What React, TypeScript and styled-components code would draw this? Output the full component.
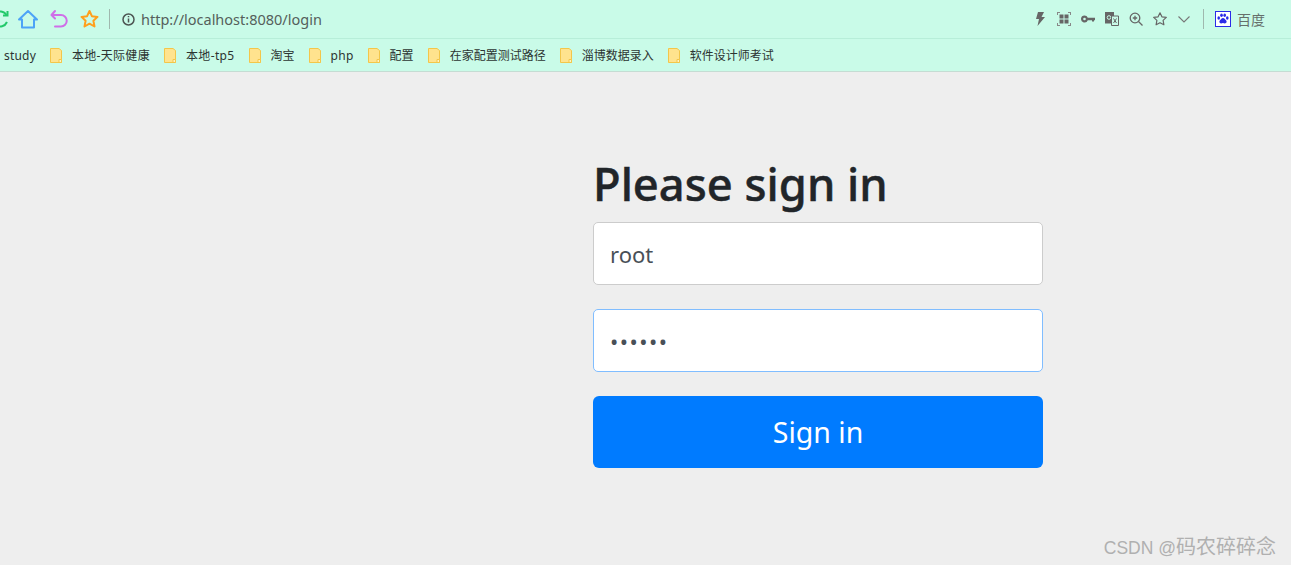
import React from 'react';
import styled, { createGlobalStyle } from 'styled-components';

const GlobalStyle = createGlobalStyle`
    html, body {
        margin: 0;
        padding: 0;
        background: #eeeeee;
    }
    body {
        font-family: "Noto Sans", "Noto Sans CJK SC", sans-serif;
    }
    * {
        box-sizing: border-box;
    }
`;

const Page = styled.div`
    position: relative;
    width: 1291px;
    height: 565px;
    overflow: hidden;
    display: flex;
    flex-direction: column;
`;

const Toolbar = styled.header`
    height: 39px;
    flex: none;
    display: flex;
    align-items: center;
    background: #c9fbe8;
    border-bottom: 1px solid #b7eed9;
    padding-right: 26px;
`;

const NavIcons = styled.div`
    display: flex;
    align-items: center;
    gap: 12px;
    margin-left: -12px;
    margin-right: 10px;
`;

const Divider = styled.span`
    width: 1px;
    height: 20px;
    background: #9fb8ae;
    flex: none;
`;

const UrlBox = styled.div`
    display: flex;
    align-items: center;
    gap: 6px;
    margin-left: 12px;
    flex: 1;
    font-size: 14.500px;
    color: #555f5b;
`;

const ToolIcons = styled.div`
    display: flex;
    align-items: center;
    gap: 10px;
    margin-right: 12px;
`;

const SearchEngine = styled.div`
    display: flex;
    align-items: center;
    gap: 6px;
    margin-left: 11px;
    font-size: 14px;
    color: #666f6b;
`;

const BookmarkBar = styled.nav`
    height: 33px;
    flex: none;
    display: flex;
    align-items: center;
    gap: 14px;
    padding-left: 4px;
    background: #c9fbe8;
    border-bottom: 1px solid #c5dcd3;
    font-size: 12px;
    color: #2c3431;
`;

const Bookmark = styled.a<{ $spacing?: number }>`
    display: flex;
    align-items: center;
    gap: 10px;
    white-space: nowrap;
    letter-spacing: ${(p) => p.$spacing ?? 0}px;
`;

const Main = styled.main`
    flex: 1;
    padding: 80px 0 0 593px;
    background: #eeeeee;
`;

const SignInForm = styled.form`
    width: 450px;
    display: flex;
    flex-direction: column;
`;

const Heading = styled.h1`
    margin: 0 0 6px;
    height: 64px;
    font-size: 45.300px;
    line-height: 64px;
    font-weight: 500;
    -webkit-text-stroke: 0.5px #212529;
    color: #212529;
    white-space: nowrap;
`;

const Field = styled.input<{ $focused?: boolean }>`
    display: block;
    width: 100%;
    height: 63px;
    margin-bottom: 24px;
    padding: 0 16px;
    border: 1px solid ${(p) => (p.$focused ? '#80bdff' : '#cccccc')};
    border-radius: 5px;
    background: #ffffff;
    font-family: inherit;
    font-size: 22px;
    color: #495057;
    outline: none;
`;

const PasswordField = styled(Field)`
    letter-spacing: 1.5px;
`;

const SubmitButton = styled.button`
    height: 72px;
    border: 0;
    border-radius: 6px;
    background: #007bff;
    color: #ffffff;
    font-family: inherit;
    font-size: 28.500px;
`;

const Watermark = styled.div`
    position: absolute;
    right: 15px;
    bottom: 5px;
    display: flex;
    align-items: baseline;
    font-family: "Liberation Sans", "Noto Sans CJK SC", sans-serif;
    font-size: 17.500px;
    color: #b0b0b0;
    white-space: pre;
`;

const WatermarkName = styled.span`
    font-size: 20px;
`;

const bookmarks = [
    { name: '本地-天际健康', spacing: 0.3 },
    { name: '本地-tp5', spacing: 0.35 },
    { name: '淘宝' },
    { name: 'php', spacing: 0.3 },
    { name: '配置' },
    { name: '在家配置测试路径' },
    { name: '淄博数据录入' },
    { name: '软件设计师考试' },
];

const FolderIcon = () => (
    <svg width="12" height="15" viewBox="0 0 12 15">
        <path d="M.5.5h8.500l2.500 2v12H.5z" fill="#ffe38e" stroke="#f3c64a" />
        <path d="M9 11.500h2.500v3H9z" fill="#fff3c4" stroke="#f3c64a" />
    </svg>
);

const RefreshIcon = () => (
    <svg width="18" height="20" viewBox="-2 0 18 20" overflow="visible" fill="none" stroke="#23c96b" strokeWidth="2">
        <path d="M16.500 6A7.500 7.500 0 1 0 17 13" />
        <path d="M13 6.500h4.500V2" />
    </svg>
);

const HomeIcon = () => (
    <svg width="20" height="20" viewBox="0 0 20 20" fill="none" stroke="#4da3f7" strokeWidth="2" strokeLinejoin="round">
        <path d="M1 10.500 10 2l9 8.500h-3v8H4v-8z" />
    </svg>
);

const UndoIcon = () => (
    <svg width="18" height="20" viewBox="0 0 18 20" fill="none" stroke="#cf6fe8" strokeWidth="2" strokeLinecap="round" strokeLinejoin="round">
        <path d="M5 2 1.500 6 5 9.500" />
        <path d="M2 6h9a5.500 5.500 0 0 1 0 11.500H5" />
    </svg>
);

const OrangeStar = () => (
    <svg width="19" height="20" viewBox="0 0 19 20" fill="none" stroke="#ff9f1c" strokeWidth="2" strokeLinejoin="round">
        <path d="M9.500 2l2.400 5.200 5.600.7-4.100 3.900 1.100 5.700-5-2.800-5 2.800 1.100-5.700L1.500 7.900l5.600-.7z" />
    </svg>
);

const InfoIcon = () => (
    <svg width="13" height="13" viewBox="0 0 13 13" fill="none" stroke="#4d5552">
        <circle cx="6.500" cy="6.500" r="5.500" strokeWidth="1.500" />
        <path d="M6.500 5.500v4M6.500 3v1.300" strokeWidth="1.500" />
    </svg>
);

const BoltIcon = () => (
    <svg width="14" height="14" viewBox="0 0 14 14" fill="#666">
        <path d="M5 0h6L8.500 5H12L4.500 14l1.500-7H3z" />
    </svg>
);

const QrIcon = () => (
    <svg width="14" height="14" viewBox="0 0 14 14" fill="#666">
        <path d="M0 3V0h3v1H1v2zM11 0h3v3h-1V1h-2zM0 11h1v2h2v1H0zM13 11h1v3h-3v-1h2z" fill="#888" />
        <path d="M2.500 2.500h4v4h-4zM7.500 2.500h4v4h-4zM2.500 7.500h4v4h-4zM7.500 7.500h4v4h-4z" />
    </svg>
);

const KeyIcon = () => (
    <svg width="14" height="14" viewBox="0 0 14 14" fill="#666">
        <path d="M3.500 3.500a3.500 3.500 0 0 1 3.300 2.300H14v2.400h-1v1.300h-2V8.200H6.800A3.500 3.500 0 1 1 3.500 3.500zm0 2.200a1.300 1.300 0 1 0 0 2.600 1.300 1.300 0 0 0 0-2.600z" />
    </svg>
);

const TranslateIcon = () => (
    <svg width="14" height="14" viewBox="0 0 14 14">
        <path d="M0 0h9v11.500H0z" fill="#666" />
        <circle cx="4" cy="5.500" r="1.800" fill="none" stroke="#c9fbe8" />
        <path d="M6.500 4h7v9.500h-7z" fill="#c9fbe8" stroke="#666" />
        <path d="M8.500 6.500l3 4.500M11.500 6.500l-3 4.500" stroke="#666" fill="none" />
    </svg>
);

const ZoomIcon = () => (
    <svg width="14" height="14" viewBox="0 0 14 14" fill="none" stroke="#666" strokeWidth="1.300">
        <circle cx="6" cy="6" r="4.800" />
        <path d="M9.500 9.500 13.500 13.500M6 3.800v4.400M3.800 6h4.400" />
    </svg>
);

const OutlineStar = () => (
    <svg width="14" height="14" viewBox="0 0 14 14" fill="none" stroke="#666" strokeWidth="1.200" strokeLinejoin="round">
        <path d="M7 .8l1.900 4 4.400.6-3.200 3 .8 4.400L7 10.700l-3.900 2.100.8-4.400-3.200-3 4.400-.6z" />
    </svg>
);

const ChevronIcon = () => (
    <svg width="14" height="14" viewBox="0 0 14 14" fill="none" stroke="#777" strokeWidth="1.100">
        <path d="M1.500 4.500 7 10l5.500-5.500" />
    </svg>
);

const PawIcon = () => (
    <svg width="16" height="16" viewBox="0 0 16 16">
        <rect x=".5" y=".5" width="15" height="15" fill="#ffffff" stroke="#2b2be8" />
        <g fill="#2b2be8">
            <ellipse cx="3.700" cy="7" rx="1.300" ry="1.700" />
            <ellipse cx="6.500" cy="4.200" rx="1.300" ry="1.700" />
            <ellipse cx="9.700" cy="4.200" rx="1.300" ry="1.700" />
            <ellipse cx="12.300" cy="7" rx="1.300" ry="1.700" />
            <path d="M8 7c1.500 0 1.800 1.500 3 2.300 1.300 1 .6 3.400-1.400 3.200-.9-.1-1-.4-1.600-.4s-.8.300-1.700.4c-1.900.2-2.600-2.200-1.300-3.200C6.200 8.500 6.500 7 8 7z" />
        </g>
    </svg>
);

export default function App() {
    return (
        <Page>
            <GlobalStyle />
            <Toolbar>
                <NavIcons>
                    <RefreshIcon />
                    <HomeIcon />
                    <UndoIcon />
                    <OrangeStar />
                </NavIcons>
                <Divider />
                <UrlBox>
                    <InfoIcon />
                    <span>http://localhost:8080/login</span>
                </UrlBox>
                <ToolIcons>
                    <BoltIcon />
                    <QrIcon />
                    <KeyIcon />
                    <TranslateIcon />
                    <ZoomIcon />
                    <OutlineStar />
                    <ChevronIcon />
                </ToolIcons>
                <Divider />
                <SearchEngine>
                    <PawIcon />
                    <span>百度</span>
                </SearchEngine>
            </Toolbar>
            <BookmarkBar>
                <Bookmark $spacing={0.2}>study</Bookmark>
                {bookmarks.map((item) => (
                    <Bookmark key={item.name} $spacing={item.spacing}>
                        <FolderIcon />
                        {item.name}
                    </Bookmark>
                ))}
            </BookmarkBar>
            <Main>
                <SignInForm onSubmit={(e) => e.preventDefault()}>
                    <Heading>Please sign in</Heading>
                    <Field type="text" defaultValue="root" />
                    <PasswordField type="password" defaultValue="123456" $focused />
                    <SubmitButton type="submit">Sign in</SubmitButton>
                </SignInForm>
            </Main>
            <Watermark>
                {'CSDN @'}
                <WatermarkName>码农碎碎念</WatermarkName>
            </Watermark>
        </Page>
    );
}
